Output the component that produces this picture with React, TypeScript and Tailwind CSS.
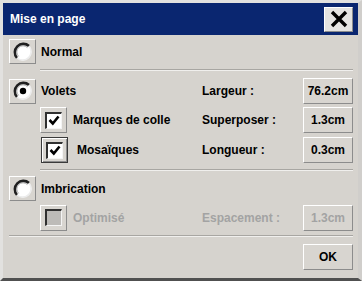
import React from "react";

const font = { fontFamily: '"Liberation Sans", Arial, sans-serif' };

function Radio({ checked }: { checked?: boolean }) {
  return (
    <div className="w-[27px] h-[25px] shrink-0 flex items-center justify-center bg-[#d8d5d0] border border-t-white border-l-white border-r-[#8c8c8c] border-b-[#8c8c8c]">
      <svg width="20" height="20" viewBox="0 0 20 20">
        <circle cx="10" cy="10" r="8.5" fill="#ffffff" />
        <path d="M4 16 A8.5 8.5 0 0 1 16 4" fill="none" stroke="#202020" strokeWidth="2.6" />
        <path d="M16 4 A8.5 8.5 0 0 1 4 16" fill="none" stroke="#ececec" strokeWidth="1.6" />
        <path d="M5.6 14.4 A6.2 6.2 0 0 1 14.4 5.6" fill="none" stroke="#909090" strokeWidth="0.8" />
        {checked && <circle cx="10" cy="10" r="3.2" fill="#000" />}
      </svg>
    </div>
  );
}

function Check({ checked, disabled, focused }: { checked?: boolean; disabled?: boolean; focused?: boolean }) {
  return (
    <div
      className={
        "w-[27px] h-[26px] shrink-0 flex items-center justify-center bg-[#d8d5d0] " +
        (focused
          ? "border border-[#3a3a3a] shadow-[inset_1px_1px_0_#ffffff,inset_-1px_-1px_0_#8c8c8c]"
          : "border border-t-white border-l-white border-r-[#8c8c8c] border-b-[#8c8c8c]")
      }
    >
      <div
        className={
          "w-[17px] h-[17px] flex items-center justify-center border-t-2 border-l-2 border-t-[#303030] border-l-[#303030] border-b border-r border-b-[#f4f4f4] border-r-[#f4f4f4] " +
          (disabled ? "bg-[#bdbbb8]" : "bg-white")
        }
      >
        {checked && (
          <svg width="12" height="11" viewBox="0 0 12 11">
            <path d="M1.5 5 L4.8 8.5 L10.5 1.5" fill="none" stroke="#000" strokeWidth="2.6" />
          </svg>
        )}
      </div>
    </div>
  );
}

function ValBtn({ children, disabled }: { children: React.ReactNode; disabled?: boolean }) {
  return (
    <div
      className={
        "w-[50px] h-[26px] shrink-0 flex items-center justify-center text-[12px] font-bold bg-[#d8d5d0] border border-t-white border-l-white border-r-[#8c8c8c] border-b-[#8c8c8c] " +
        (disabled ? "text-[#a3a3a3]" : "text-black")
      }
    >
      {children}
    </div>
  );
}

function Sep({ left }: { left: number }) {
  return (
    <div className={"flex flex-col " + (left === 31 ? "ml-[31px]" : "ml-0")}>
      <div className="h-px bg-[#a8a6a2]" />
      <div className="h-px bg-[#f0efed]" />
    </div>
  );
}

export default function App() {
  return (
    <div
      style={font}
      className="w-[362px] h-[281px] bg-[#d6d3ce] border-t-[3px] border-l-[3px] border-r-[4px] border-b-[3px] border-t-[#e2e1df] border-l-[#e2e1df] border-r-[#d0cecb] border-b-[#505050] flex flex-col"
    >
      <div className="h-[32px] bg-[#0a2670] flex items-center justify-between pl-[7px] pr-[5px]">
        <span className="text-white font-bold text-[12px]">Mise en page</span>
        <div className="w-[29px] h-[25px] bg-[#e4e3e1] border border-t-white border-l-white border-r-[#8c8c8c] border-b-[#8c8c8c] flex items-center justify-center">
          <svg width="18" height="18" viewBox="0 0 18 18">
            <path d="M2 2 L16 16 M16 2 L2 16" stroke="#000" strokeWidth="3.4" />
          </svg>
        </div>
      </div>

      <div className="flex flex-col pl-[6px] pr-[5px] text-[12px] font-bold text-black">
        <div className="mt-[4px] h-[25px] flex items-center gap-[5px]">
          <Radio />
          <span>Normal</span>
        </div>
        <div className="mt-[5px]">
          <Sep left={31} />
        </div>

        <div className="mt-[7px] h-[26px] flex items-center">
          <div className="w-[193px] flex items-center gap-[5px]">
            <Radio checked />
            <span>Volets</span>
          </div>
          <span className="flex-1">Largeur :</span>
          <ValBtn>76.2cm</ValBtn>
        </div>

        <div className="mt-[3px] h-[26px] flex items-center">
          <div className="w-[193px] flex items-center gap-[6px] pl-[31px]">
            <Check checked />
            <span>Marques de colle</span>
          </div>
          <span className="flex-1">Superposer :</span>
          <ValBtn>1.3cm</ValBtn>
        </div>

        <div className="mt-[4px] h-[26px] flex items-center">
          <div className="w-[193px] flex items-center gap-[9px] pl-[32px]">
            <Check checked focused />
            <span>Mosaïques</span>
          </div>
          <span className="flex-1">Longueur :</span>
          <ValBtn>0.3cm</ValBtn>
        </div>

        <div className="mt-[6px]">
          <Sep left={31} />
        </div>

        <div className="mt-[4px] h-[27px] flex items-center gap-[5px]">
          <Radio />
          <span>Imbrication</span>
        </div>

        <div className="mt-[2px] h-[27px] flex items-center">
          <div className="w-[193px] flex items-center gap-[6px] pl-[31px]">
            <Check disabled />
            <span className="text-[#a3a3a3]">Optimisé</span>
          </div>
          <span className="flex-1 text-[#a3a3a3]">Espacement :</span>
          <ValBtn disabled>1.3cm</ValBtn>
        </div>

        <div className="mt-[4px]">
          <Sep left={0} />
        </div>

        <div className="mt-[7px] flex justify-end">
          <ValBtn>OK</ValBtn>
        </div>
      </div>
    </div>
  );
}
